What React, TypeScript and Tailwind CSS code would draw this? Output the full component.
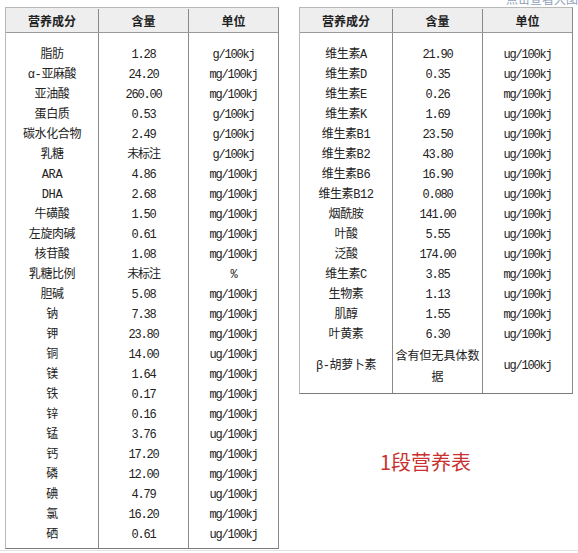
type Row = [string, string, string];

const leftRows: Row[] = [
  ["脂肪", "1.28", "g/100kj"],
  ["α-亚麻酸", "24.20", "mg/100kj"],
  ["亚油酸", "260.00", "mg/100kj"],
  ["蛋白质", "0.53", "g/100kj"],
  ["碳水化合物", "2.49", "g/100kj"],
  ["乳糖", "未标注", "g/100kj"],
  ["ARA", "4.86", "mg/100kj"],
  ["DHA", "2.68", "mg/100kj"],
  ["牛磺酸", "1.50", "mg/100kj"],
  ["左旋肉碱", "0.61", "mg/100kj"],
  ["核苷酸", "1.08", "mg/100kj"],
  ["乳糖比例", "未标注", "%"],
  ["胆碱", "5.08", "mg/100kj"],
  ["钠", "7.38", "mg/100kj"],
  ["钾", "23.80", "mg/100kj"],
  ["铜", "14.00", "ug/100kj"],
  ["镁", "1.64", "mg/100kj"],
  ["铁", "0.17", "mg/100kj"],
  ["锌", "0.16", "mg/100kj"],
  ["锰", "3.76", "ug/100kj"],
  ["钙", "17.20", "mg/100kj"],
  ["磷", "12.00", "mg/100kj"],
  ["碘", "4.79", "ug/100kj"],
  ["氯", "16.20", "mg/100kj"],
  ["硒", "0.61", "ug/100kj"],
];

const rightRows: Row[] = [
  ["维生素A", "21.90", "ug/100kj"],
  ["维生素D", "0.35", "ug/100kj"],
  ["维生素E", "0.26", "mg/100kj"],
  ["维生素K", "1.69", "ug/100kj"],
  ["维生素B1", "23.50", "ug/100kj"],
  ["维生素B2", "43.80", "ug/100kj"],
  ["维生素B6", "16.90", "ug/100kj"],
  ["维生素B12", "0.080", "ug/100kj"],
  ["烟酰胺", "141.00", "ug/100kj"],
  ["叶酸", "5.55", "ug/100kj"],
  ["泛酸", "174.00", "ug/100kj"],
  ["维生素C", "3.85", "mg/100kj"],
  ["生物素", "1.13", "ug/100kj"],
  ["肌醇", "1.55", "mg/100kj"],
  ["叶黄素", "6.30", "ug/100kj"],
];

const cjk = "[font-family:'Liberation_Mono','Noto_Sans_CJK_SC',monospace]";
const grid = "grid grid-cols-[92px_90px_90px]";
// name cells: 12px; number/unit cells squeezed to ~6px per char like the old SimSun look
const nameCell = `${cjk} text-[12px] tracking-[-0.4px]`;
const numCell = `${cjk} text-[12px] tracking-[-1.2px] border-l border-[#8a8a8a]`;

function Spacer({ h }: { h: string }) {
  return (
    <div className={grid}>
      <div className={h} />
      <div className={`${h} border-l border-[#8a8a8a]`} />
      <div className={`${h} border-l border-[#8a8a8a]`} />
    </div>
  );
}

function NutrientTable({
  rows,
  bottom,
  children,
}: {
  rows: Row[];
  bottom: string;
  children?: React.ReactNode;
}) {
  return (
    <div className="w-[274px] border border-t-[#b8b8b8] border-l-[#b8b8b8] border-r-[#8a8a8a] border-b-[#7a7a7a] text-[#222]">
      {/* header */}
      <div className={`${grid} h-[25px] pt-px bg-[#eeeeee] border-b border-[#9a9a9a] font-bold text-[12px] [font-family:'Noto_Sans_CJK_SC',sans-serif]`}>
        <div className="flex items-center justify-center">营养成分</div>
        <div className="flex items-center justify-center border-l border-[#8a8a8a]">含量</div>
        <div className="flex items-center justify-center border-l border-[#8a8a8a]">单位</div>
      </div>
      <Spacer h="h-[10px]" />
      {rows.map(([name, value, unit]) => (
        <div key={name} className={`${grid} h-5 leading-5 text-center`}>
          <div className={`${nameCell} pt-[2px]`}>{name}</div>
          <div className={`${numCell} pt-[2px]`}>{value}</div>
          <div className={`${numCell} pt-[2px]`}>{unit}</div>
        </div>
      ))}
      {children}
      <Spacer h={bottom} />
    </div>
  );
}

export default function App() {
  return (
    <div className="w-[578px] h-[553px] bg-white overflow-hidden flex flex-col">
      <div className="flex items-start pl-[5px]">
        <div className="mt-[7px]">
          <NutrientTable rows={leftRows} bottom="h-[5px]" />
        </div>
        <div className="ml-[20px] flex flex-col">
          <div className="h-[7px] w-[279px] overflow-hidden text-right">
            <div className="-mt-[10px] text-[12px] text-[#8fa0b8] [font-family:'Noto_Sans_CJK_SC',sans-serif]">点击查看大图</div>
          </div>
          <NutrientTable rows={rightRows} bottom="h-[7px]">
            <div className={`${grid} text-center`}>
              <div className={`${nameCell} flex items-center justify-center pt-[2px]`}>β-胡萝卜素</div>
              <div className="text-[12px] leading-[21px] pt-px border-l border-[#8a8a8a] [font-family:'Noto_Sans_CJK_SC',sans-serif]">
                含有但无具体数据
              </div>
              <div className={`${numCell} flex items-center justify-center pt-[2px]`}>ug/100kj</div>
            </div>
          </NutrientTable>
          <div className="ml-[81px] mt-[54px] text-[20px] leading-[28px] text-[#c8312f] [font-family:'Noto_Sans_CJK_SC',sans-serif]">
            1段营养表
          </div>
        </div>
      </div>
      <div className="mt-px h-px w-full bg-[#e2e2e2]" />
    </div>
  );
}
